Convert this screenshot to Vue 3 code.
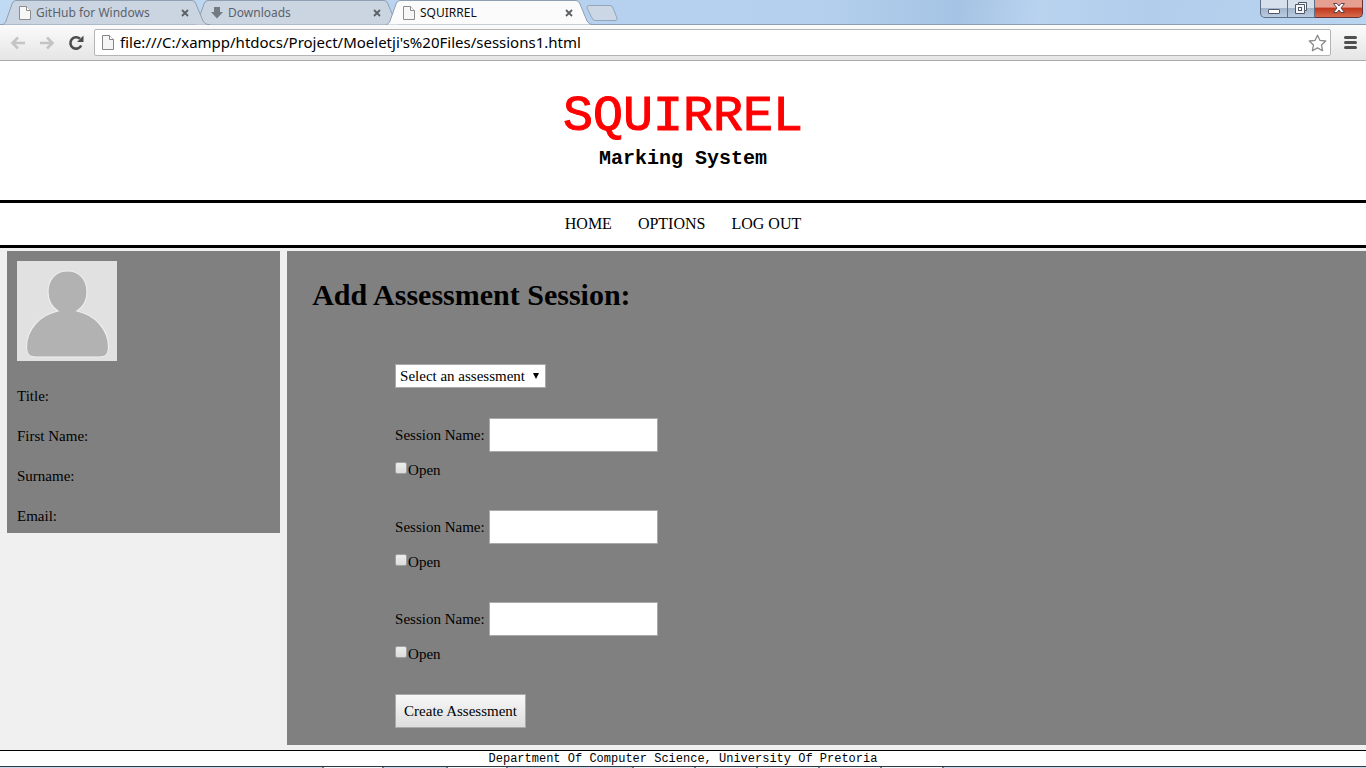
<script setup>
import { ref } from 'vue'

const tabs = [
  { title: 'GitHub for Windows', icon: 'page', active: false },
  { title: 'Downloads', icon: 'download', active: false },
  { title: 'SQUIRREL', icon: 'page', active: true },
]
const links = ['HOME', 'OPTIONS', 'LOG OUT']
const profile = ['Title:', 'First Name:', 'Surname:', 'Email:']
const address = ref("file:///C:/xampp/htdocs/Project/Moeletji's%20Files/sessions1.html")
const assessment = ref('')
const sessions = ref([
  { id: 1, name: '', open: false },
  { id: 2, name: '', open: false },
  { id: 3, name: '', open: false },
])
</script>

<template>
  <div class="window">
    <div class="tabstrip">
      <div class="tabs">
        <div v-for="t in tabs" :key="t.title" class="tab" :class="{ active: t.active }">
          <svg class="tab-shape" viewBox="0 0 208 25" preserveAspectRatio="none" aria-hidden="true">
            <path d="M0 24.5C2 24.5 3 23 4 21L10 4Q11 .5 14 .5H190Q193 .5 194 4L201 21Q203 24.5 206 24.5H208" />
          </svg>
          <svg v-if="t.icon === 'page'" class="tab-icon" viewBox="0 0 12 14" aria-hidden="true">
            <path d="M.5.5H7.5L11.5 4.5V13.5H.5Z" fill="#f7f7f7" stroke="#8c8c8c" />
            <path d="M7.5.5V4.5H11.5" fill="#fff" stroke="#8c8c8c" />
          </svg>
          <svg v-else class="tab-icon" viewBox="0 0 12 14" aria-hidden="true">
            <path d="M3 1H9V6H12L6 12.5L0 6H3Z" fill="#737a82" />
          </svg>
          <span class="tab-title">{{ t.title }}</span>
          <button class="tab-close" type="button" :aria-label="'Close ' + t.title">
            <svg viewBox="0 0 8 8"><path d="M1 1L7 7M7 1L1 7" stroke="#5c5f63" stroke-width="1.8" /></svg>
          </button>
        </div>
        <button class="new-tab" type="button" aria-label="New tab">
          <svg viewBox="0 0 32 16">
            <path d="M3 .5H24Q26 .5 27 3L31 13Q31.500 15.500 29 15.500H9Q7 15.500 6 13L1 3Q.5 .5 3 .5Z" fill="#cbd7e5" stroke="#94a6ba" />
          </svg>
        </button>
      </div>
      <div class="controls">
        <button type="button" class="ctl min" aria-label="Minimize">
          <svg viewBox="0 0 14 12"><rect x="1.500" y="6.500" width="11" height="4" rx=".5" fill="#fff" stroke="#4f5767" /></svg>
        </button>
        <button type="button" class="ctl max" aria-label="Restore">
          <svg viewBox="0 0 14 12">
            <path d="M4.500.5H12.500V8.500H10.500V11.500H1.500V2.500H4.500Z" fill="#f4f6fa" stroke="#4f5767" />
            <path d="M4.500 2.500H10.500V8.500" fill="none" stroke="#4f5767" />
            <rect x="4.500" y="5.500" width="3" height="3" fill="#fff" stroke="#4f5767" />
          </svg>
        </button>
        <button type="button" class="ctl close" aria-label="Close">
          <svg viewBox="0 0 14 12"><path d="M1.500 1.500H5L7 4L9 1.500H12.500L9 6L12.500 10.500H9L7 8L5 10.500H1.500L5 6Z" fill="#fff" stroke="#5c4550" /></svg>
        </button>
      </div>
    </div>

    <div class="toolbar">
      <button class="tool" type="button" aria-label="Back">
        <svg width="16" height="14" viewBox="0 0 16 14"><path d="M8 1.500L2.500 7L8 12.500M3 7H15" fill="none" stroke="#c4c4c4" stroke-width="2.600" /></svg>
      </button>
      <button class="tool" type="button" aria-label="Forward">
        <svg width="16" height="14" viewBox="0 0 16 14"><path d="M8 1.500L13.500 7L8 12.500M13 7H1" fill="none" stroke="#c4c4c4" stroke-width="2.600" /></svg>
      </button>
      <button class="tool" type="button" aria-label="Reload">
        <svg width="16" height="16" viewBox="0 0 16 16">
          <path d="M12 3.800A5.700 5.700 0 1 0 13.200 10.500" fill="none" stroke="#4d4d4d" stroke-width="2.600" />
          <path d="M15.500 .5V7H9Z" fill="#4d4d4d" />
        </svg>
      </button>
      <div class="omnibox">
        <svg width="12" height="15" viewBox="0 0 12 15" aria-hidden="true">
          <path d="M.5.5H7.500L11.500 4.500V14.500H.5Z" fill="#f5f5f5" stroke="#858585" />
          <path d="M7.500.5V4.500H11.500" fill="#fff" stroke="#858585" />
        </svg>
        <input v-model="address" type="text" aria-label="Address" />
        <button class="star" type="button" aria-label="Bookmark">
          <svg width="19" height="18" viewBox="0 0 19 18">
            <path d="M9.500 1.200L11.900 6.300L17.700 7L13.500 11L14.600 16.700L9.500 13.900L4.400 16.700L5.500 11L1.300 7L7.100 6.300Z" fill="#fff" stroke="#8a8a8a" stroke-width="1.300" stroke-linejoin="round" />
          </svg>
        </button>
      </div>
      <button class="tool menu" type="button" aria-label="Menu">
        <svg width="13" height="13" viewBox="0 0 13 13"><path d="M1.500 1.500H11.500M1.500 6.500H11.500M1.500 11.500H11.500" stroke="#505050" stroke-width="3" stroke-linecap="round" /></svg>
      </button>
    </div>

    <header class="banner">
      <h1>SQUIRREL</h1>
      <p>Marking System</p>
    </header>
    <nav class="nav">
      <a v-for="l in links" :key="l" href="#">{{ l }}</a>
    </nav>

    <div class="content">
      <aside class="sidebar">
        <svg class="avatar" viewBox="0 0 100 100" role="img" aria-label="Profile picture">
          <rect width="100" height="100" fill="#e1e1e1" />
          <path d="M41 50C35 46 31 39 31 31C31 18 39 10 50.500 10C62 10 70 18 70 31C70 39 66 46 60 50C78 54 91.500 68 91.500 86C91.500 93 89 96 82 96H19C12 96 9.500 93 9.500 86C9.500 68 23 54 41 50Z" fill="#b2b2b2" stroke="#efefef" stroke-width="1.200" />
        </svg>
        <p v-for="p in profile" :key="p">{{ p }}</p>
      </aside>
      <main class="panel">
        <h2>Add Assessment Session:</h2>
        <form @submit.prevent>
          <div class="picker">
            <select v-model="assessment" aria-label="Assessment">
              <option value="">Select an assessment</option>
            </select>
            <svg viewBox="0 0 6 6" aria-hidden="true"><path d="M0 0H6L3 6Z" /></svg>
          </div>
          <div v-for="s in sessions" :key="s.id" class="session">
            <div class="row">
              <label :for="'name' + s.id">Session Name:</label>
              <input :id="'name' + s.id" v-model="s.name" type="text" />
            </div>
            <div class="check">
              <input :id="'open' + s.id" v-model="s.open" type="checkbox" />
              <label :for="'open' + s.id">Open</label>
            </div>
          </div>
          <button class="create" type="submit">Create Assessment</button>
        </form>
      </main>
    </div>

    <footer class="footer">Department Of Computer Science, University Of Pretoria</footer>
    <div class="taskbar">
      <i class="start"></i><i class="lit"></i><i class="dim"></i><i class="lit"></i><i class="wide"></i>
      <i v-for="n in 5" :key="n" class="lit item"></i><i class="rest"></i>
    </div>
  </div>
</template>

<style>
html,
body {
  background: #f0f0f0;
}
</style>

<style scoped>
.window {
  display: flex;
  flex-direction: column;
  min-height: 100vh;
  box-sizing: border-box;
  color: #000;
  font-family: "Liberation Serif", "Times New Roman", serif;
  font-size: 15px;
  line-height: 20px;
}
button {
  padding: 0;
  border: 0;
  background: none;
  color: inherit;
}
svg {
  display: block;
}

/* tab strip */
.tabstrip {
  display: flex;
  justify-content: space-between;
  height: 25px;
  background: linear-gradient(100deg, #c1daf3 0%, #b6d1ef 45%, #b4d0ee 60%, #a5c3e4 70%, #b9d3ef 76%, #b1cdeb 84%, #bad5f0 100%);
  box-shadow: inset 0 -1px #8f9fb1;
}
.tabs {
  display: flex;
  padding-left: 2px;
}
.tab {
  position: relative;
  display: flex;
  align-items: center;
  box-sizing: border-box;
  width: 208px;
  height: 25px;
  margin-right: -16px;
  padding: 0 21px 0 17px;
  color: #5b626b;
  font: 12px/16px "Noto Sans", "Open Sans", sans-serif;
}
.tab:first-child {
  z-index: 1;
}
.tab.active {
  z-index: 2;
  color: #111;
}
.tab-shape {
  position: absolute;
  inset: 0;
  width: 100%;
  height: 100%;
}
.tab-shape path {
  fill: #cbd5e2;
  stroke: #8f9fb1;
}
.tab.active .tab-shape path {
  fill: #fbfbfb;
}
.tab-icon {
  position: relative;
  width: 12px;
  height: 14px;
  margin-right: 5px;
}
.tab-title {
  position: relative;
  flex: 1;
}
.tab-close {
  position: relative;
  width: 8px;
  height: 8px;
}
.new-tab {
  width: 32px;
  height: 16px;
  margin: 5px 0 0 8px;
}
.controls {
  display: flex;
  height: 18px;
  margin-right: 3px;
}
.ctl {
  display: flex;
  align-items: center;
  justify-content: center;
  box-sizing: border-box;
  width: 27px;
  padding-bottom: 2px;
  border: 1px solid #5c6f87;
  border-top: 0;
  border-left-width: 0;
  background: linear-gradient(#d5e0ec 0 45%, #a2b5cb 50%, #b9cbe0);
}
.ctl svg {
  width: 14px;
  height: 12px;
}
.min {
  width: 28px;
  padding-bottom: 0;
  border-left-width: 1px;
  border-bottom-left-radius: 5px;
}
.close {
  width: 48px;
  border-color: #6b3038;
  border-bottom-right-radius: 5px;
  background: linear-gradient(#e5a092 0 40%, #c0391f 50%, #d66b4a);
}

/* toolbar */
.toolbar {
  display: flex;
  align-items: center;
  box-sizing: border-box;
  height: 36px;
  padding: 0 8px 0 10px;
  border-bottom: 1px solid #aaa;
  background: linear-gradient(#fbfbfb, #e5e5e5);
}
.tool {
  width: 16px;
  margin-right: 13px;
}
.tool.menu {
  width: 13px;
  margin: 0 1px 0 13px;
}
.omnibox {
  display: flex;
  flex: 1;
  align-items: center;
  box-sizing: border-box;
  height: 27px;
  margin-left: -3px;
  padding: 0 3px 0 7px;
  border: 1px solid #b4b4b4;
  border-radius: 2px;
  background: #fff;
}
.omnibox input {
  flex: 1;
  min-width: 0;
  margin-left: 6px;
  padding: 0 0 2px;
  border: 0;
  outline: 0;
  background: none;
  color: #000;
  font: 15px/20px "Noto Sans", "Open Sans", sans-serif;
}

/* site header */
.banner {
  box-sizing: border-box;
  height: 139px;
  padding-top: 28px;
  background: #fff;
  font-family: "Liberation Mono", "Courier New", monospace;
  text-align: center;
}
.banner h1 {
  margin: 0;
  color: #f00;
  font-size: 50px;
  font-weight: 400;
  line-height: 56px;
  -webkit-text-stroke: 1px #f00;
}
.banner p {
  margin: 0;
  font-size: 20px;
  font-weight: 700;
  line-height: 28px;
}
.nav {
  display: flex;
  justify-content: center;
  gap: 26px;
  padding: 11px 0;
  border: solid #000;
  border-width: 3px 0;
  background: #fff;
  font-size: 16px;
}
.nav a {
  color: #000;
  text-decoration: none;
}

/* columns */
.content {
  display: flex;
  flex: 1;
  align-items: flex-start;
  gap: 7px;
  padding: 3px 0 5px;
  background: #f0f0f0;
}
.sidebar {
  box-sizing: border-box;
  width: 20%;
  min-width: 120px;
  margin-left: 7px;
  padding: 10px 10px 7px;
  background: #808080;
}
.avatar {
  width: 100px;
  height: 100px;
  margin-bottom: 25px;
}
.sidebar p {
  margin: 0 0 20px;
}
.sidebar p:last-child {
  margin-bottom: 0;
}
.panel {
  flex: 1;
  align-self: stretch;
  padding-bottom: 17px;
  background: #808080;
}
.panel h2 {
  margin: 26px 0 52px 25px;
  font-size: 30px;
  line-height: 35px;
}
form {
  padding-left: 10%;
}
.picker {
  position: relative;
  width: 151px;
  margin-bottom: 30px;
}
.picker select {
  display: block;
  width: 100%;
  height: 24px;
  padding: 0 4px;
  border: 1px solid #a9a9a9;
  border-radius: 0;
  appearance: none;
  background: #fff;
  color: #000;
  font: inherit;
}
.picker svg {
  position: absolute;
  top: 9px;
  right: 7px;
  width: 6px;
  height: 6px;
  pointer-events: none;
}
.row {
  display: flex;
  align-items: center;
  gap: 4px;
}
.row label {
  width: 90px;
  white-space: nowrap;
}
.row input {
  box-sizing: border-box;
  width: 169px;
  height: 34px;
  padding: 1px 5px;
  border: 1px solid #a9a9a9;
  background: #fff;
  font: inherit;
}
.check {
  display: flex;
  margin: 8px 0 30px;
}
.check input {
  width: 12px;
  height: 12px;
  margin: 2px 1px 0 0;
  border: 1px solid #a0a0a0;
  border-radius: 2px;
  box-sizing: border-box;
  appearance: none;
  background: linear-gradient(#ededed, #dcdcdc);
}
.check input:checked {
  background: #444;
}
.create {
  height: 34px;
  padding: 0 8px;
  border: 1px solid #a9a9a9;
  background: linear-gradient(#f8f8f8, #dddddd);
  color: #000;
  font: inherit;
}

/* footer */
.footer {
  padding-top: 1px;
  border-top: 1px solid #000;
  background: #fff;
  font: 12px/14px "Liberation Mono", "Courier New", monospace;
  text-align: center;
}
.taskbar {
  display: flex;
  height: 1px;
  border-top: 1px solid #2c3a48;
  background: #c9d9e8;
}
.taskbar i {
  box-sizing: border-box;
  width: 60px;
  border-right: 2px solid #6c7a88;
}
.taskbar .lit {
  background: #f4f7fa;
}
.taskbar .start {
  width: 324px;
}
.taskbar .dim {
  width: 64px;
}
.taskbar .wide {
  width: 126px;
}
.taskbar .item {
  width: 62px;
}
.taskbar .rest {
  flex: 1;
  border: 0;
}
</style>
